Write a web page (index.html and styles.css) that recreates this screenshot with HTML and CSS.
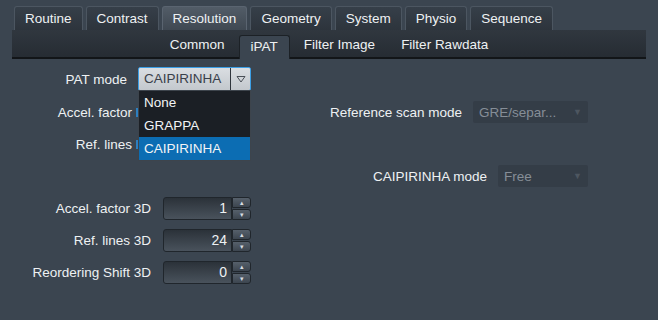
FILE: index.html
```html
<!DOCTYPE html>
<html lang="en">
<head>
    <meta charset="UTF-8">
    <title>iPAT</title>
    <link rel="stylesheet" href="styles.css">
</head>
<body>
    <div class="tabs">
        <div class="tab">Routine</div>
        <div class="tab">Contrast</div>
        <div class="tab active">Resolution</div>
        <div class="tab">Geometry</div>
        <div class="tab">System</div>
        <div class="tab">Physio</div>
        <div class="tab">Sequence</div>
    </div>
    <div class="subbar">
        <div class="subtab">Common</div>
        <div class="subtab active">iPAT</div>
        <div class="subtab">Filter Image</div>
        <div class="subtab">Filter Rawdata</div>
    </div>

    <div class="form">
        <div class="row">
            <label class="lbl lbl-a">PAT mode</label>
            <div class="combo open">
                <span class="combo-text">CAIPIRINHA</span>
                <span class="combo-btn">
                    <svg width="10" height="8" viewBox="0 0 10 8"><path d="M1 1.5 H9 L5 7 Z" fill="none" stroke="#4a5058" stroke-width="1"/></svg>
                </span>
                <div class="popup">
                    <div class="item">None</div>
                    <div class="item">GRAPPA</div>
                    <div class="item sel">CAIPIRINHA</div>
                </div>
            </div>
        </div>
        <div class="row">
            <label class="lbl lbl-b">Accel. factor</label>
            <div class="hidden-ctl"></div>
            <div class="right">
                <label class="lbl-r">Reference scan mode</label>
                <div class="combo-dis wide">
                    <span>GRE/separ...</span>
                    <span class="dis-arrow">&#9660;</span>
                </div>
            </div>
        </div>
        <div class="row">
            <label class="lbl lbl-b">Ref. lines</label>
            <div class="hidden-ctl"></div>
        </div>
        <div class="row">
            <div class="right">
                <label class="lbl-r">CAIPIRINHA mode</label>
                <div class="combo-dis">
                    <span>Free</span>
                    <span class="dis-arrow">&#9660;</span>
                </div>
            </div>
        </div>
        <div class="row">
            <label class="lbl lbl-c">Accel. factor 3D</label>
            <div class="spin">
                <div class="spin-field">1</div>
                <div class="spin-btns">
                    <div class="spin-btn">&#9652;</div>
                    <div class="spin-btn">&#9662;</div>
                </div>
            </div>
        </div>
        <div class="row">
            <label class="lbl lbl-c">Ref. lines 3D</label>
            <div class="spin">
                <div class="spin-field">24</div>
                <div class="spin-btns">
                    <div class="spin-btn">&#9652;</div>
                    <div class="spin-btn">&#9662;</div>
                </div>
            </div>
        </div>
        <div class="row">
            <label class="lbl lbl-c">Reordering Shift 3D</label>
            <div class="spin">
                <div class="spin-field">0</div>
                <div class="spin-btns">
                    <div class="spin-btn">&#9652;</div>
                    <div class="spin-btn">&#9662;</div>
                </div>
            </div>
        </div>
    </div>
</body>
</html>
```

FILE: styles.css
```css
body {
    margin: 0;
    background-color: #3b4550;
    font-family: 'Liberation Sans', Arial, sans-serif;
    font-size: 13.5px;
    color: #eef1f3;
    width: 658px;
    height: 320px;
    overflow: hidden;
}

.tabs {
    display: flex;
    gap: 3px;
    padding: 6px 0 0 14px;
    height: 24px;
}

.tab {
    box-sizing: border-box;
    height: 24px;
    padding: 0 10px;
    line-height: 23px;
    border: 1px solid #4c5661;
    border-bottom: none;
    border-radius: 3px 3px 0 0;
    background: linear-gradient(#363f49, #2d343c);
}

.tab.active {
    background: linear-gradient(#525c67, #3f4852);
    border-color: #5a6470;
}

.subbar {
    margin: 0 12px;
    height: 27px;
    border-bottom: 2px solid #121518;
    background: linear-gradient(#30373f, #262c33);
    display: flex;
    justify-content: center;
    align-items: flex-end;
    gap: 2px;
}

.subtab {
    height: 23px;
    line-height: 21px;
    padding: 0 12px;
    box-sizing: border-box;
}

.subtab.active {
    height: 24px;
    margin-bottom: -2px;
    background: #3b4550;
    border: 1px solid #1c2126;
    border-bottom: none;
    border-radius: 3px 3px 0 0;
    padding: 0 11px;
}

.form {
    width: 588px;
    margin-top: 8px;
    display: flex;
    flex-direction: column;
    gap: 10px;
}

.row {
    display: flex;
    align-items: center;
    height: 22px;
    position: relative;
}

.row:first-child {
    height: 24px;
}

.lbl {
    text-align: right;
    flex: none;
}

.lbl-a { width: 127px; margin-right: 11px; }
.lbl-b { width: 132px; margin-right: 4px; }
.lbl-c { width: 151px; margin-right: 12px; }

.hidden-ctl {
    width: 20px;
    height: 9px;
    border-left: 2px solid #2d7fc0;
}

.right {
    margin-left: auto;
    display: flex;
    align-items: center;
}

.lbl-r {
    margin-right: 11px;
}

.combo {
    position: relative;
    box-sizing: border-box;
    width: 113px;
    height: 24px;
    display: flex;
    border: 1px solid #3c9fe6;
    border-radius: 2px;
    background: linear-gradient(#dadee2, #c3c8cd);
    color: #39404a;
}

.combo-text {
    flex: 1;
    padding-left: 5px;
    line-height: 22px;
    border-right: 1px solid #2f353c;
}

.combo-btn {
    width: 19px;
    display: flex;
    align-items: center;
    justify-content: center;
}

.popup {
    position: absolute;
    top: 22px;
    left: -1px;
    width: 113px;
    background: #1b1f25;
    border: 1px solid #3d444c;
    box-sizing: border-box;
    z-index: 2;
    color: #f2f4f6;
}

.item {
    height: 23px;
    line-height: 23px;
    padding-left: 5px;
}

.item.sel {
    background: #0c6db3;
}

.combo-dis {
    box-sizing: border-box;
    width: 90px;
    height: 22px;
    background: #343d47;
    border-radius: 2px;
    color: #868e97;
    display: flex;
    align-items: center;
    justify-content: space-between;
    padding: 0 6px;
}

.combo-dis.wide {
    width: 115px;
}

.dis-arrow {
    font-size: 9px;
    color: #4d5660;
}

.spin {
    display: flex;
    height: 23px;
}

.spin-field {
    box-sizing: border-box;
    width: 69px;
    height: 23px;
    border: 1px solid #20262c;
    border-radius: 3px 0 0 3px;
    background: linear-gradient(#2b3239, #49525c);
    text-align: right;
    padding-right: 4px;
    line-height: 21px;
    font-size: 14px;
}

.spin-btns {
    display: flex;
    flex-direction: column;
    gap: 1px;
}

.spin-btn {
    box-sizing: border-box;
    width: 19px;
    height: 11px;
    border: 1px solid #20262c;
    border-radius: 0 3px 3px 0;
    background: linear-gradient(#56606b, #3c454f);
    font-size: 7px;
    line-height: 9px;
    text-align: center;
    color: #d8dde2;
}
```
